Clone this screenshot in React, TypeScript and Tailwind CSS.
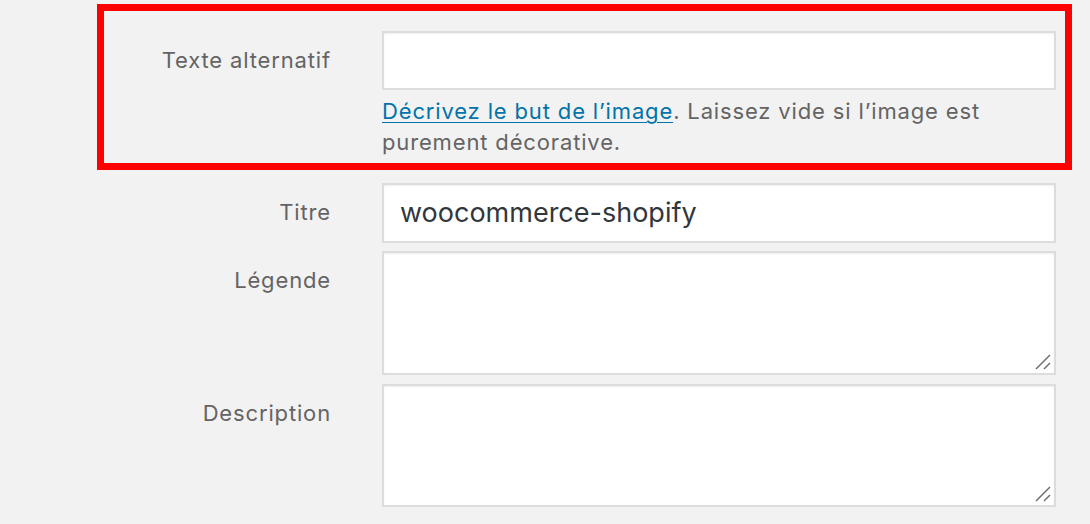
import React from "react";

const font = { fontFamily: "Inter, 'Noto Sans', sans-serif" };

function Handle() {
  return (
    <svg
      className="absolute right-[3px] bottom-[3px]"
      width="16"
      height="16"
      viewBox="0 0 16 16"
    >
      <line x1="1" y1="15" x2="15" y2="1" stroke="#6b6b6b" strokeWidth="1.5" />
      <line x1="9" y1="15" x2="15" y2="9" stroke="#6b6b6b" strokeWidth="1.5" />
    </svg>
  );
}

function Label({ children }: { children: React.ReactNode }) {
  return (
    <div className="w-[227px] shrink-0 text-right pt-[14px] text-[22px] leading-[30px] tracking-[0.85px] text-[#646464]">
      {children}
    </div>
  );
}

const boxCls =
  "w-[674px] shrink-0 border-2 border-[#dcdcdc] bg-white shadow-[inset_0_1px_2px_rgba(0,0,0,0.07)]";

export default function App() {
  return (
    <div className="w-[1090px] h-[524px] bg-[#f2f2f2] overflow-hidden" style={font}>
      <div className="ml-[97px] mt-[4px] w-[975px] border-[7px] border-[#ff0000] pt-[20px] pb-[5px] flex">
        <Label>Texte alternatif</Label>
        <div className="ml-[51px] w-[674px]">
          <div className={boxCls + " h-[59px]"} />
          <p className="mt-[6px] text-[22px] leading-[31px] tracking-[0.85px] text-[#646464]">
            <a className="text-[#0073aa] underline underline-offset-[3px] decoration-1">
              Décrivez le but de l’image
            </a>
            . Laissez vide si l’image est
            <br />
            purement décorative.
          </p>
        </div>
      </div>

      <div className="ml-[104px] mt-[13px] flex">
        <Label>Titre</Label>
        <div className={boxCls + " ml-[51px] h-[60px] flex items-center pl-[16px] text-[27px] text-[#32373c]"}>
          woocommerce-shopify
        </div>
      </div>

      <div className="ml-[104px] mt-[8px] flex">
        <Label>Légende</Label>
        <div className={boxCls + " ml-[51px] h-[124px] relative"}>
          <Handle />
        </div>
      </div>

      <div className="ml-[104px] mt-[9px] flex">
        <Label>Description</Label>
        <div className={boxCls + " ml-[51px] h-[123px] relative"}>
          <Handle />
        </div>
      </div>
    </div>
  );
}
